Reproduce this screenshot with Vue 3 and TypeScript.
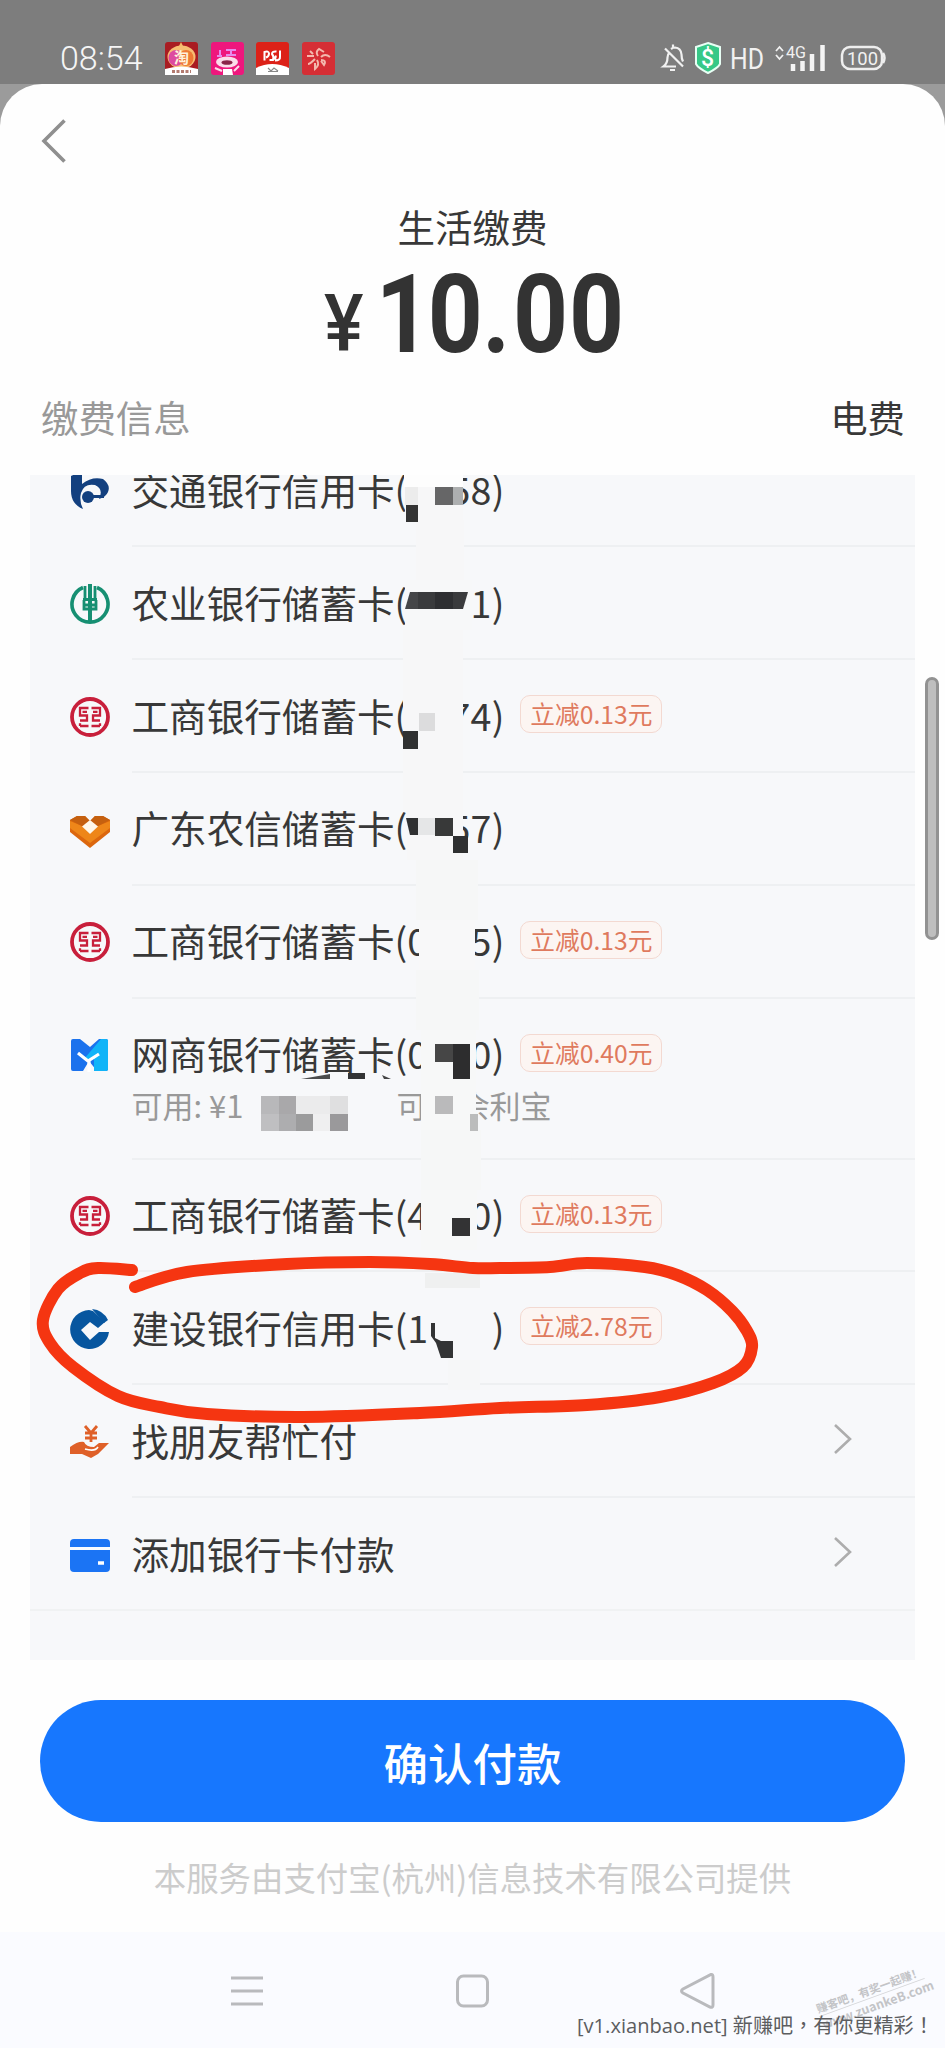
<script setup lang="ts">
interface Card {
  icon: string
  name: string
  digits?: string
  badge?: string
  extra?: boolean
  arrow?: boolean
}

// A blank inside `digits` is a digit hidden by the redaction.
const rows: Card[] = [
  { icon: 'bocom', name: '交通银行信用卡', digits: '  58' },
  { icon: 'abc', name: '农业银行储蓄卡', digits: '   1' },
  { icon: 'icbc', name: '工商银行储蓄卡', digits: '  74', badge: '立减0.13元' },
  { icon: 'gdrc', name: '广东农信储蓄卡', digits: '  57' },
  { icon: 'icbc', name: '工商银行储蓄卡', digits: '0  5', badge: '立减0.13元' },
  { icon: 'mybank', name: '网商银行储蓄卡', digits: '0  0', badge: '立减0.40元', extra: true },
  { icon: 'icbc', name: '工商银行储蓄卡', digits: '4  0', badge: '立减0.13元' },
  { icon: 'ccb', name: '建设银行信用卡', digits: '1   ', badge: '立减2.78元' },
  { icon: 'friend', name: '找朋友帮忙付', arrow: true },
  { icon: 'card', name: '添加银行卡付款', arrow: true },
]

type Box = [number, number, number, number, string]

const covers: Box[] = [
  [404, 475, 59, 12, '#fdfdfd'],
  [405, 487, 58, 33, '#f7f7f8'],
  [416, 520, 48, 60, '#f7f7f8'],
  [405, 580, 67, 50, '#f7f8f9'],
  [403, 630, 60, 180, '#f7f7f8'],
  [407, 810, 56, 50, '#f7f7f8'],
  [416, 860, 62, 60, '#f6f7f7'],
  [419, 920, 56, 50, '#f8f8f9'],
  [416, 970, 63, 60, '#f6f7f7'],
  [421, 1030, 55, 100, '#f7f8f8'],
  [421, 1130, 60, 60, '#f6f7f7'],
  [421, 1190, 56, 60, '#f7f8f8'],
  [425, 1273, 55, 15, '#eff0f0'],
  [430, 1310, 61, 50, '#f7f8fa'],
  [448, 1360, 32, 30, '#f6f7f8'],
]

const blocks: Box[] = [
  [405, 487, 13, 18, '#ececec'],
  [435, 487, 18, 18, '#666667'],
  [453, 487, 10, 18, '#adafb0'],
  [406, 505, 12, 17, '#333333'],
  [419, 713, 16, 18, '#dcdcdd'],
  [403, 731, 15, 18, '#303132'],
  [418, 818, 17, 17, '#e5e6e7'],
  [435, 818, 18, 18, '#383939'],
  [453, 836, 15, 17, '#2f3031'],
  [435, 1044, 18, 18, '#464646'],
  [453, 1044, 17, 35, '#2d2d2e'],
  [348, 1073, 17, 6, '#333435'],
  [261, 1096, 18, 18, '#b8b8ba'],
  [279, 1096, 17, 18, '#a9a8aa'],
  [296, 1096, 34, 18, '#ebebec'],
  [330, 1096, 18, 18, '#dfdfe0'],
  [261, 1114, 18, 17, '#bfbfc1'],
  [279, 1114, 17, 17, '#adadaf'],
  [296, 1114, 17, 17, '#9b9b9c'],
  [313, 1114, 17, 17, '#efeff0'],
  [330, 1114, 18, 17, '#9a999b'],
  [435, 1096, 18, 18, '#bababb'],
  [470, 1114, 8, 17, '#bbbcbc'],
  [452, 1218, 18, 18, '#333334'],
]

const strokePoints: [number, number][] = [
  [132, 1270], [98, 1268], [80, 1273], [58, 1289], [43, 1320], [50, 1343], [73, 1367],
  [118, 1396], [160, 1407], [207, 1414], [303, 1417], [420, 1413], [500, 1408],
  [587, 1405], [660, 1397], [713, 1383], [743, 1367], [752, 1347], [747, 1331],
  [732, 1311], [707, 1290], [677, 1275], [645, 1267], [587, 1263], [550, 1267],
  [500, 1268], [473, 1268], [430, 1264], [370, 1262], [287, 1264], [187, 1272], [135, 1287],
]

function smoothPath(p: [number, number][]): string {
  let d = `M${p[0][0]} ${p[0][1]}`
  for (let i = 0; i < p.length - 1; i++) {
    const a = p[Math.max(i - 1, 0)]
    const b = p[i]
    const c = p[i + 1]
    const e = p[Math.min(i + 2, p.length - 1)]
    d += `C${b[0] + (c[0] - a[0]) / 6} ${b[1] + (c[1] - a[1]) / 6} ${c[0] - (e[0] - b[0]) / 6} ${c[1] - (e[1] - b[1]) / 6} ${c[0]} ${c[1]}`
  }
  return d
}

const marker = smoothPath(strokePoints)
</script>

<template>
  <div class="screen">
    <header class="status">
      <span class="clock">08:54</span>
      <div class="apps">
        <svg viewBox="0 0 33 33">
          <rect width="33" height="33" rx="3" fill="#a91c22" />
          <path d="M14 4l2-4 2 4z" fill="#f4b765" />
          <ellipse cx="16.500" cy="15" rx="14" ry="11.500" fill="#f7bd72" />
          <ellipse cx="11" cy="16" rx="7.500" ry="8" fill="#dd4aa0" />
          <ellipse cx="21" cy="16" rx="7.500" ry="8" fill="#ee7a35" />
          <text x="9" y="21" font-size="15" font-weight="700" fill="#fff2dc">淘</text>
          <path d="M0 27Q16 22 33 27V33H0z" fill="#fff" />
          <path d="M7 29.500h19" stroke="#b37b70" stroke-width="3" stroke-dasharray="3 1.500" />
        </svg>
        <svg viewBox="0 0 33 33">
          <rect width="33" height="33" rx="3" fill="#ee177d" />
          <path d="M9 8v5M6 14h5M15 8h10M15 13h10M20 8v6" stroke="#e58aec" stroke-width="2" fill="none" />
          <ellipse cx="16" cy="20" rx="11" ry="5.500" fill="#fbdcea" />
          <ellipse cx="16" cy="20.500" rx="5.500" ry="2.300" fill="#8a2448" />
          <path d="M12 27h9l1 6H12z" fill="#fff" />
          <path d="M4 26l7 3M28 24l-5 5" stroke="#fbdcea" stroke-width="2" />
        </svg>
        <svg viewBox="0 0 33 33">
          <rect width="33" height="33" rx="3" fill="#dc2118" />
          <path d="M8.500 18.500V10q4-1.500 4.500 1.500 0 3-3 4M20.500 9.500q-4.500-.5-4.500 2.500 2.500 3 1 6h-3.500M19 18.500q5.500 0 5-4V8.500M19.500 18q-1-3 1-4" fill="none" stroke="#fff" stroke-width="2" />
          <path d="M0 26Q16 18 33 26V33H0z" fill="#fff" />
          <path d="M12 26l3 3 3-3 4 3M12 29.500h10" stroke="#888" stroke-width="1.200" fill="none" />
        </svg>
        <svg viewBox="0 0 33 33">
          <rect width="33" height="33" rx="3" fill="#d52e35" />
          <g fill="none" stroke="#f3b9ae" stroke-width="2">
            <path d="M16 14q-3-4 1-7l5 3M19 15q4-4 9 0M19 18q6 0 3 5l-3-4M15 18q3 5-2 9v-6M13 17q-5 5-7 5M12 14H5M11 12L8 9" />
          </g>
        </svg>
      </div>
      <svg class="system" viewBox="660 40 228 36">
        <g fill="none" stroke="#f1f1f1" stroke-width="2.200">
          <path d="M676 66.500H663.500q4-3 4-9 0-3 2-5M671 49q2-1.500 4-1.500 6 .5 6.500 7 0 4 1.500 7M673 44.500v3M670 70h5M665 48.500L683 66.500" />
        </g>
        <path d="M708 43l12 4v17q-2 4-12 9-10-5-12-9V47z" fill="#37c887" stroke="#e8fff5" stroke-width="2" />
        <text x="701" y="66" font-size="23" font-weight="500" fill="#fff">$</text>
        <text x="730" y="69" font-size="30" fill="#f1f1f1" textLength="34" lengthAdjust="spacingAndGlyphs">HD</text>
        <path d="M776 51l3.500-4 3.500 4M776 55l3.500 4 3.500-4" fill="none" stroke="#f1f1f1" stroke-width="1.800" />
        <text x="786" y="58" font-size="17" fill="#f1f1f1" textLength="20" lengthAdjust="spacingAndGlyphs">4G</text>
        <path d="M793 64v7M802.500 61v10M812 54v17M822.500 45v26" stroke="#f4f4f4" stroke-width="4.500" />
        <rect x="842" y="47" width="40" height="22" rx="8" fill="none" stroke="#eee" stroke-width="2.500" />
        <path d="M883 53q3 5 0 10" fill="none" stroke="#eee" stroke-width="2.500" />
        <text x="847" y="64.500" font-size="18" fill="#f1f1f1" textLength="31" lengthAdjust="spacingAndGlyphs">100</text>
      </svg>
    </header>

    <main class="sheet">
      <svg class="back" viewBox="0 0 26 46"><path d="M24.500 2.500L4 23l20.500 20.500" fill="none" stroke="#8f8f8f" stroke-width="3.600" /></svg>
      <h1 class="title">生活缴费</h1>
      <svg class="amount" viewBox="320 270 304 86">
        <g fill="#333">
          <text transform="translate(324 351) scale(.93 1)" font-size="80" font-weight="500">¥</text>
          <text transform="translate(0 352) scale(.88 1)" font-size="109" font-weight="700" x="427 486 548 583 646.500">10.00</text>
        </g>
      </svg>
      <div class="info"><span class="muted">缴费信息</span><span>电费</span></div>

      <div class="scroll">
        <ul class="list">
          <li v-for="(row, i) in rows" :key="i" :class="['row', { tall: row.extra, last: i === rows.length - 1 }]">
            <svg class="icon" viewBox="0 0 40 40">
              <g v-if="row.icon === 'bocom'">
                <path d="M1 5L12 0V13Q22 5 33 8 41 14 38 21 36 26 29 28 34 18 25 14 14 12 11 22 9 30 13 38 1 33 1 20z" fill="#13407f" />
                <circle cx="18" cy="26" r="6" fill="#13407f" />
                <path d="M22 25.500H34" stroke="#13407f" stroke-width="3" />
              </g>
              <g v-else-if="row.icon === 'abc'" fill="none" stroke="#168f72">
                <path d="M13 3.500A18 18 0 1 0 27 3.500" stroke-width="3.600" />
                <path d="M20 0V38" stroke-width="4" />
                <path d="M15 2V17M25 2V17M13 15.500H27M13 21H27M14 16V25H26V16" stroke-width="2.800" />
              </g>
              <g v-else-if="row.icon === 'icbc'" fill="none" stroke="#c81f3b">
                <circle cx="20" cy="20" r="18" stroke-width="3.800" />
                <path d="M18.500 11H10V18.500H17V23.500H10M10 29H18.500M12.500 14.800H17M21.500 11H30V18.500H23V23.500H30M30 29H21.500M27.500 14.800H23M10 26.200V29M30 26.200V29" stroke-width="2.300" />
              </g>
              <g v-else-if="row.icon === 'gdrc'" transform="translate(0 3)">
                <path d="M0 8L7 4H15L20 9 25 4H33L40 8V20L20 36 0 20z" fill="#dc670e" />
                <path d="M0 9L12 14 20 22 28 14 40 9V16L20 31 0 16z" fill="#ee8619" />
                <path d="M0 8L7 4H15L20 9 12 14zM40 8L33 4H25L20 9 28 14z" fill="#c5600f" />
                <path d="M20 8L28 14.500 20 22 12 14.500z" fill="#fff8ea" />
              </g>
              <g v-else-if="row.icon === 'mybank'">
                <path d="M1 6Q1 4 3 4H10L20 12 29 4H36Q38 4 38 6V34Q38 36 36 36H27L19 26 13 36H3Q1 36 1 34z" fill="#1b72ed" />
                <path d="M14 24L31 4H36Q38 4 38 6V34Q38 36 36 36H24V24z" fill="#10b4f8" />
                <path d="M8 18L18 26 29 19M19 25V37" fill="none" stroke="#fff" stroke-width="3.200" />
              </g>
              <g v-else-if="row.icon === 'ccb'">
                <path d="M19 1A19.500 19.500 0 1 0 39 23H29L20 31 11 21 20 13 28 19 35 13 23 2z" fill="#07569f" />
                <path d="M22 0Q33 1 38 11L34 14z" fill="#07569f" />
              </g>
              <g v-else-if="row.icon === 'friend'">
                <path d="M0 25Q8 19 14 20 16 25 24 25L29 21H39L28 32 21 36 12 32H0z" fill="#df6028" />
                <path d="M15 4L21 11 27 4M21 10V20M15 11H27M15 16H27" fill="none" stroke="#df6028" stroke-width="2.800" />
                <path d="M15 27Q25 30 28 25" fill="none" stroke="#fff" stroke-width="1.600" />
              </g>
              <g v-else>
                <rect y="4" width="40" height="33" rx="4" fill="#1b74f4" />
                <path d="M0 13.500H40" stroke="#f8fbff" stroke-width="3" />
                <path d="M28 28H34" stroke="#fff" stroke-width="3.500" />
              </g>
            </svg>
            <div class="body">
              <div class="line">
                <span class="name">{{ row.name }}</span>
                <span v-if="row.digits" class="digits">(<span v-for="(d, k) in row.digits.split('')" :key="k" class="digit">{{ d }}</span>)</span>
                <span v-if="row.badge" class="badge">{{ row.badge }}</span>
                <svg v-if="row.arrow" class="arrow" viewBox="0 0 20 32"><path d="M2 2L17 16 2 30" fill="none" stroke="#adadad" stroke-width="2.600" /></svg>
              </div>
              <div v-if="row.extra" class="extra"><span class="avail">可用: ¥1</span><span class="move">可</span><span>余利宝</span></div>
            </div>
          </li>
        </ul>
      </div>

      <button class="confirm">确认付款</button>
      <p class="notice">本服务由支付宝(杭州)信息技术有限公司提供</p>
    </main>

    <nav class="nav">
      <svg viewBox="0 0 36 40"><path d="M2 7H34M2 20H34M2 33H34" stroke="#b9babd" stroke-width="3" /></svg>
      <svg viewBox="0 0 36 40"><rect x="3.500" y="5" width="30" height="30" rx="6" fill="none" stroke="#b9babd" stroke-width="3" /></svg>
      <svg viewBox="0 0 36 40"><path d="M32 3.500Q34 3 34 6V34Q34 37 31 36L4 22Q1 20 4 18z" fill="none" stroke="#b9babd" stroke-width="3" /></svg>
    </nav>

    <div class="thumb"></div>

    <svg class="overlay" viewBox="0 0 945 2048">
      <rect v-for="(b, i) in covers" :key="'c' + i" :x="b[0]" :y="b[1]" :width="b[2]" :height="b[3]" :fill="b[4]" />
      <rect v-for="(b, i) in blocks" :key="'b' + i" :x="b[0]" :y="b[1]" :width="b[2]" :height="b[3]" :fill="b[4]" />
      <path d="M405 609L410 592H435V609z" fill="#454648" />
      <path d="M418 592H468L463 609H418z" fill="#3a3b3d" />
      <path d="M435 592H453V609H435z" fill="#2e2f32" />
      <path d="M406 818H418V835H410z" fill="#303132" />
      <path d="M301 1079L330 1074V1079z" fill="#4b4c4d" />
      <path d="M382 1075L391 1079H384z" fill="#444" />
      <path d="M431 1323H435V1338L441 1341H453V1358H441L436 1343 431 1336z" fill="#333435" />
      <path :d="marker" fill="none" stroke="#f53511" stroke-width="12" stroke-linecap="round" stroke-linejoin="round" />
    </svg>

    <div class="stamp"><span>赚客吧，有奖一起赚！</span><span class="site">www.zuankeB.com</span></div>
    <div class="credit">[v1.xianbao.net] 新赚吧<span class="mark">，</span>有你更精彩<span class="mark">！</span></div>
  </div>
</template>

<style>
body {
  margin: 0;
}
</style>

<style scoped>
.screen {
  position: relative;
  display: flex;
  flex-direction: column;
  width: 945px;
  height: 2048px;
  overflow: hidden;
  background: #9b9b9b;
  color: #383838;
  font-family: "Noto Sans CJK SC", sans-serif;
}
.status {
  display: flex;
  flex: none;
  box-sizing: border-box;
  height: 84px;
  padding: 40px 0 0 60px;
  background: #7d7d7d;
}
.clock {
  width: 105px;
  color: #f5f5f5;
  font: 300 34px/36px Roboto, sans-serif;
}
.apps {
  display: flex;
  gap: 12.600px;
  padding-top: 1.500px;
}
.apps svg {
  width: 33px;
  height: 33px;
}
.system {
  width: 228px;
  height: 36px;
  margin-left: 325.200px;
  font-family: Roboto, sans-serif;
}
.sheet {
  display: flex;
  flex: none;
  flex-direction: column;
  box-sizing: border-box;
  height: 1848px;
  padding: 34px 40px 0;
  border-radius: 42px 42px 0 0;
  background: #fefefe;
}
.back {
  width: 26px;
  height: 46px;
}
.title {
  margin: 34px 0 0;
  font-size: 37.500px;
  font-weight: 400;
  line-height: 56px;
  text-align: center;
}
.amount {
  width: 304px;
  height: 86px;
  margin: 16px 0 0 280px;
  overflow: visible;
  font-family: Roboto, sans-serif;
}
.info {
  display: flex;
  justify-content: space-between;
  height: 86px;
  margin-top: 33px;
  padding-left: 1px;
  font-size: 37.400px;
  line-height: 56px;
}
.muted {
  color: #999;
}
.scroll {
  display: flex;
  flex-direction: column;
  justify-content: flex-end;
  height: 1185px;
  margin: 0 -10px;
  overflow: hidden;
  background: #f7f8fa;
}
.list {
  margin: 0 0 49px;
  padding: 0;
  list-style: none;
}
.row {
  display: flex;
  box-sizing: border-box;
  height: 112.850px;
  padding-left: 40px;
}
.tall {
  height: 161px;
}
.icon {
  flex: none;
  width: 40px;
  height: 40px;
  margin: 36.500px 21.500px 0 0;
}
.body {
  flex: 1;
  box-sizing: border-box;
  border-bottom: 2px solid #eef0f2;
}
.last {
  border-bottom: 2px solid #f0f2f3;
}
.last .body {
  border-bottom: 0;
}
.line {
  display: flex;
  align-items: center;
  height: 109px;
  font-size: 37.600px;
  line-height: 56px;
}
.digit {
  display: inline-block;
  width: 21.100px;
}
.badge {
  box-sizing: border-box;
  height: 38px;
  margin: -1px 0 0 16px;
  padding: 0 9px;
  border: 1.500px solid #f3d9d1;
  border-radius: 10px;
  background: #fcf5f2;
  color: #df7a5e;
  font-size: 24.700px;
  line-height: 35px;
}
.arrow {
  width: 20px;
  height: 32px;
  margin: -1px 62px 0 auto;
}
.extra {
  display: flex;
  margin-top: -25px;
  color: #999;
  font-size: 31px;
  line-height: 44px;
}
.avail {
  width: 265px;
}
.move {
  width: 62px;
}
.confirm {
  flex: none;
  height: 122px;
  margin: 40px 0 0;
  border: 0;
  border-radius: 61px;
  background: #1777fe;
  color: #fff;
  font: 500 44.500px/121px "Noto Sans CJK SC", sans-serif;
}
.notice {
  margin: 31px 0 0;
  color: #ccc;
  font-size: 32.400px;
  line-height: 48px;
  text-align: center;
}
.nav {
  display: flex;
  flex: none;
  gap: 189px;
  box-sizing: border-box;
  height: 116px;
  padding: 39px 0 0 229px;
  background: #fafbff;
}
.nav svg {
  width: 36px;
  height: 40px;
}
.thumb {
  position: absolute;
  top: 677px;
  left: 925px;
  box-sizing: border-box;
  width: 14px;
  height: 263px;
  border: 3px solid #929292;
  border-radius: 7px;
  background: #bebebe;
}
.overlay {
  position: absolute;
  inset: 0;
  width: 945px;
  height: 2048px;
  pointer-events: none;
}
.stamp {
  position: absolute;
  top: 1982px;
  left: 816px;
  display: flex;
  flex-direction: column;
  width: 112px;
  transform: rotate(-20deg);
  color: #c3c4c7;
  font-size: 11.200px;
  font-weight: 700;
  line-height: 15px;
  white-space: nowrap;
}
.site {
  border-top: 1px solid #d5d6d9;
  font-size: 12.500px;
}
.credit {
  position: absolute;
  top: 2011px;
  left: 577px;
  color: #5c5d5f;
  font: 20.100px/28px "Open Sans", "Noto Sans CJK SC", sans-serif;
  white-space: nowrap;
}
.mark {
  font-family: "Noto Sans CJK TC", sans-serif;
}
</style>
